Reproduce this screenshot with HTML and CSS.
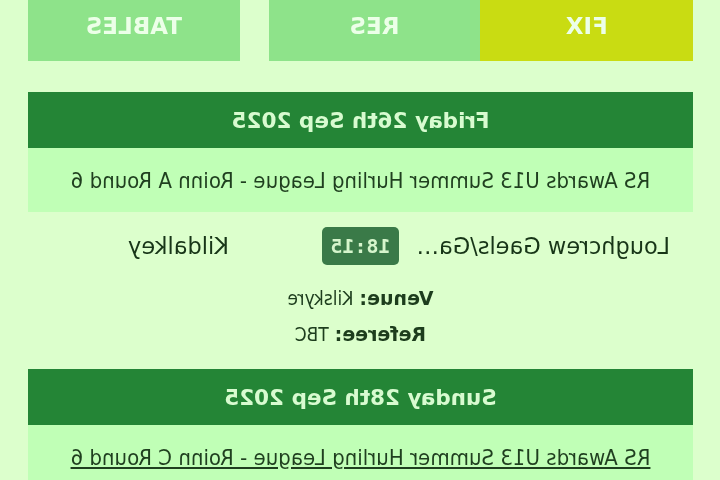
FILE: index.html
```html
<!DOCTYPE html>
<html lang="en">
<head>
    <meta charset="UTF-8">
    <meta name="viewport" content="width=device-width, initial-scale=1.0">
    <title>Fixtures</title>
    <link rel="stylesheet" href="styles.css">
</head>
<body>
    <div class="page">
        <div class="tabs">
            <div class="tab active">FIX</div>
            <div class="tab">RES</div>
            <div class="tab tables">TABLES</div>
        </div>

        <div class="day">
            <div class="date">Friday 26th Sep 2025</div>
            <div class="comp">RS Awards U13 Summer Hurling League - Roinn A Round 6</div>
            <div class="match">
                <div class="team">Loughcrew Gaels/Gaels United</div>
                <div class="time"><span>18:15</span></div>
                <div class="team away">Kildalkey</div>
            </div>
            <p class="info"><b>Venue:</b> <span>Kilskyre</span></p>
            <p class="info"><b>Referee:</b> <span>TBC</span></p>
        </div>

        <div class="day next">
            <div class="date">Sunday 28th Sep 2025</div>
            <div class="comp"><a href="#">RS Awards U13 Summer Hurling League - Roinn C Round 6</a></div>
        </div>
    </div>
</body>
</html>
```

FILE: styles.css
```css
body {
    margin: 0;
    background: #dcffcc;
    overflow: hidden;
    font-family: 'DejaVu Sans', sans-serif;
}
.page {
    width: 720px;
    transform: scaleX(-1);
}
.tabs {
    display: flex;
    margin: -10px 28px 0 27px;
    height: 71px;
}
.tab {
    width: 212px;
    display: flex;
    align-items: center;
    justify-content: center;
    background: #8ee38a;
    color: #ecffe8;
    font-weight: bold;
    font-size: 23px;
}
.tab.active {
    width: 213px;
    background: #c9dc12;
}
.tab.tables {
    margin-left: 29px;
}
.day {
    margin: 31px 28px 0 27px;
}
.day.next {
    margin-top: 17px;
}
.date {
    height: 56px;
    display: flex;
    align-items: center;
    justify-content: center;
    background: #248536;
    color: #d8fbd0;
    font-weight: bold;
    font-size: 21.5px;
}
.comp {
    height: 64px;
    display: flex;
    align-items: center;
    justify-content: center;
    background: #c0ffb6;
    color: #1f3f1f;
    font-family: 'DejaVu Sans Condensed', 'DejaVu Sans', sans-serif;
    font-size: 22px;
}
.comp a {
    color: #1f3f1f;
}
.match {
    display: grid;
    grid-template-columns: 255px 1fr 255px;
    align-items: center;
    margin: 15px 23px 0 23px;
    height: 38px;
}
.team {
    text-align: center;
    white-space: nowrap;
    overflow: hidden;
    text-overflow: ellipsis;
    font-size: 22.5px;
    color: #173517;
}
.time {
    display: flex;
    justify-content: center;
}
.time span {
    background: #3a7a48;
    color: #d6f5cc;
    font-family: 'DejaVu Sans Mono', monospace;
    font-weight: bold;
    font-size: 20px;
    padding: 0 8px;
    height: 38px;
    line-height: 38px;
    border-radius: 5px;
}
.info {
    margin: 0;
    text-align: center;
    font-size: 19px;
    line-height: 36px;
    color: #1d3d1d;
}
.info:first-of-type {
    margin-top: 15px;
}
.info span {
    font-family: 'DejaVu Sans Condensed', 'DejaVu Sans', sans-serif;
}
```
